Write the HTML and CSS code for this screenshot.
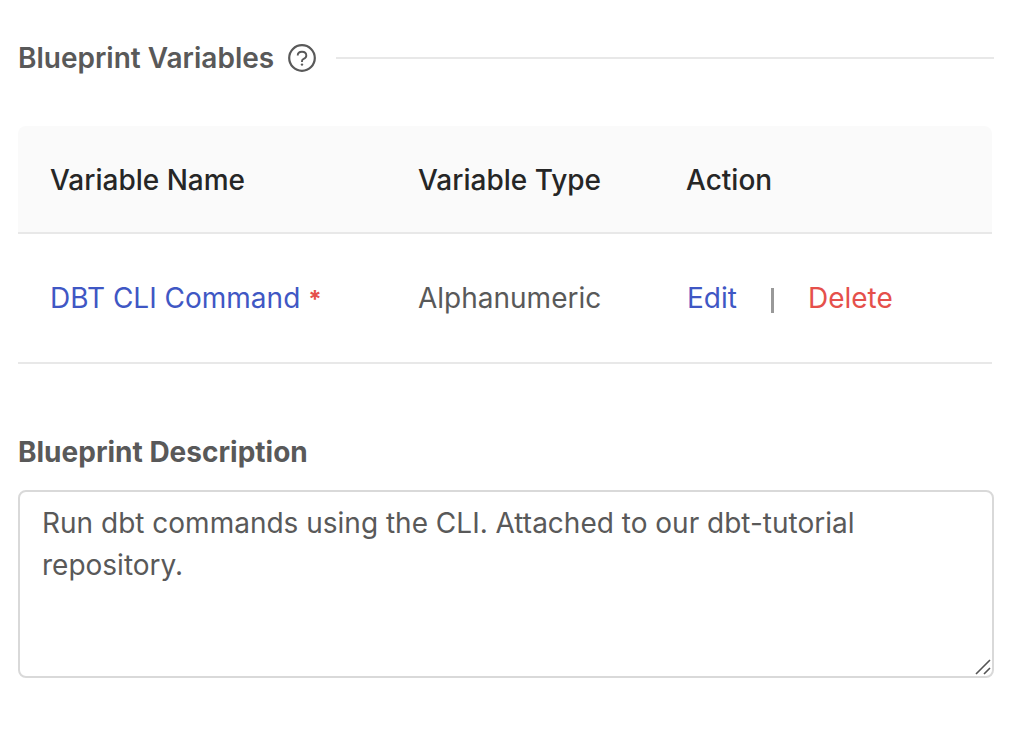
FILE: index.html
```html
<!DOCTYPE html>
<html lang="en">
<head>
<meta charset="utf-8">
<title>Blueprint Variables</title>
<link rel="stylesheet" href="styles.css">
</head>
<body>
<main class="page">
  <header class="section-head">
    <h2 class="section-title">Blueprint Variables</h2>
    <button class="help" type="button" aria-label="Help">
      <svg class="help-icon" viewBox="0 0 28 28" fill="none" stroke="currentColor" stroke-width="2.2" aria-hidden="true">
        <circle cx="14" cy="14" r="12.8"/>
        <path d="M9.7 11.5c0-2.2 1.8-3.8 4.3-3.8s4.3 1.6 4.3 3.8c0 1.7-1.1 2.8-2.6 3.4-1.1.5-1.7 1.1-1.7 2.1v1" stroke-width="1.9"/>
        <circle cx="14" cy="20.6" r="1.2" fill="currentColor" stroke="none"/>
      </svg>
    </button>
    <span class="rule"></span>
  </header>

  <table class="variables">
    <thead>
      <tr><th class="col-name" scope="col">Variable Name</th><th class="col-type" scope="col">Variable Type</th><th scope="col">Action</th></tr>
    </thead>
    <tbody>
      <tr>
        <td><a class="link" href="#variable">DBT CLI Command</a><span class="required">*</span></td>
        <td>Alphanumeric</td>
        <td>
          <div class="actions">
            <a class="link" href="#edit">Edit</a>
            <span class="divider"></span>
            <a class="link danger" href="#delete">Delete</a>
          </div>
        </td>
      </tr>
    </tbody>
  </table>

  <div class="field">
    <label class="field-label" for="description">Blueprint Description</label>
    <div class="textarea-wrap">
      <textarea class="textarea" id="description">Run dbt commands using the CLI. Attached to our dbt-tutorial repository.</textarea>
      <svg class="grip" viewBox="0 0 16 16" fill="none" stroke="#555" stroke-width="1.6" aria-hidden="true"><path d="M1 15 15 1M9 15l6-6"/></svg>
    </div>
  </div>
</main>
</body>
</html>
```
FILE: styles.css
```css
* { box-sizing: border-box; }
body {
  margin: 0;
  background: #fff;
  color: #595959;
  font: 28px/42px Inter, sans-serif;
}
.page { padding: 37px 38px 60px 18px; }
.section-head { display: flex; align-items: center; }
.section-title { margin: 0; font-size: 28px; font-weight: 600; }
.help {
  display: flex;
  margin-left: 14px;
  padding: 0;
  border: 0;
  background: none;
  color: #595959;
}
.help-icon { width: 28px; height: 28px; }
.rule { flex: 1; height: 2px; margin-left: 20px; background: #e8e8e8; }
.variables {
  width: calc(100% - 2px);
  margin-top: 47px;
  border-spacing: 0;
  table-layout: fixed;
}
.variables th, .variables td {
  padding: 33px 0 31px 32px;
  border-bottom: 2px solid #e8e8e8;
  text-align: left;
}
.variables th {
  background: #fafafa;
  color: #262626;
  font-weight: 500;
}
.variables th:first-child { border-top-left-radius: 8px; }
.variables th:last-child { border-top-right-radius: 8px; }
.variables td { padding-top: 43px; padding-bottom: 43px; }
.col-name { width: 368px; }
.col-type { width: 268px; }
.link { color: #3f57c4; text-decoration: none; }
.danger { color: #e5504b; }
.required {
  margin-left: 8px;
  color: #e5504b;
  font-size: 24px;
  font-weight: 700;
  line-height: 1;
}
.actions { display: flex; align-items: center; padding-left: 1px; }
.divider { width: 3px; height: 25px; margin: 4px 34px 0; background: #999; }
.field { margin-top: 67px; }
.field-label { display: block; font-weight: 700; }
.textarea-wrap { position: relative; margin-top: 17px; }
.textarea {
  display: block;
  width: 100%;
  height: 188px;
  padding: 10px 22px;
  border: 2px solid #d9d9d9;
  border-radius: 8px;
  background: #fff;
  color: #595959;
  font: inherit;
  resize: none;
}
.grip { position: absolute; right: 3px; bottom: 3px; width: 16px; height: 16px; }
```
